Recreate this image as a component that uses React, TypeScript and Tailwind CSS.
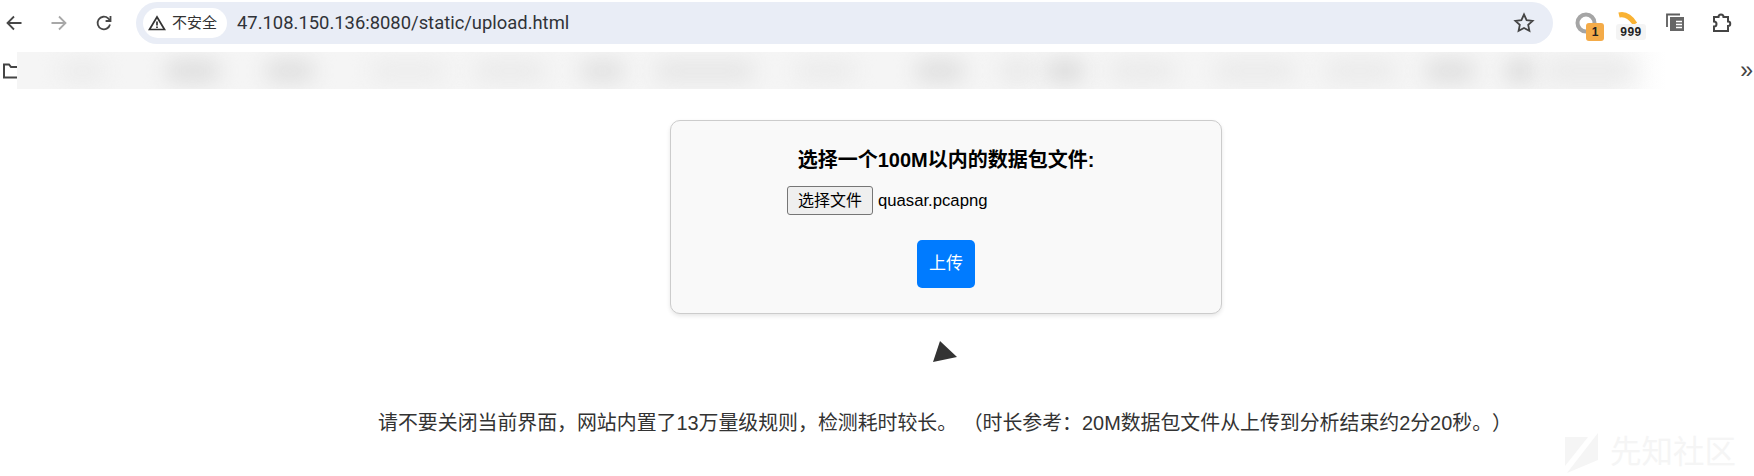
import React from "react";

const font = { fontFamily: '"Liberation Sans","Noto Sans CJK SC",sans-serif' };

const blurs: [number, number, string][] = [
  [45, 60, "#ececec"], [55, 45, "#dfdfdf"], [50, 55, "#e0e0e0"], [75, 30, "#ededed"], [70, 35, "#ebebeb"], [45, 30, "#e2e2e2"],
  [100, 40, "#e7e7e7"], [60, 60, "#ececec"], [50, 35, "#e0e0e0"], [35, 10, "#e9e9e9"], [40, 25, "#dddddd"], [65, 40, "#ebebeb"],
  [80, 30, "#ebebeb"], [70, 30, "#ebebeb"], [50, 30, "#e0e0e0"], [30, 10, "#dcdcdc"], [90, 0, "#ebebeb"],
];

export default function App() {
  return (
    <div className="relative h-[476px] w-[1754px] overflow-hidden bg-white" style={font}>
      <header className="flex h-[46px] items-start">
        <div className="flex h-[46px] w-[136px] shrink-0 items-center pl-[6px]">
          <svg width="16" height="16" viewBox="0 0 16 16" fill="none" stroke="#474747" strokeWidth="1.8">
            <path d="M15.500 8H1.500M8 1.500 1.500 8 8 14.500" />
          </svg>
          <svg className="ml-[29px]" width="16" height="16" viewBox="0 0 16 16" fill="none" stroke="#a8a8a8" strokeWidth="1.8">
            <path d="M.5 8h14M8 1.500 14.500 8 8 14.500" />
          </svg>
          <svg className="ml-[29px]" width="16" height="16" viewBox="0 0 16 16" fill="none" stroke="#474747" strokeWidth="1.8">
            <path d="M14 9.500A6.300 6.300 0 1 1 12.200 3.400L14.200 5.500" />
            <path d="M14.500 1v5H9.600" />
          </svg>
        </div>
        <div className="mt-[2px] flex h-[42px] w-[1417px] shrink-0 items-center rounded-full bg-[#e9edf6] pl-[7px] pr-[18px]">
          <div className="flex h-[30px] w-[84px] shrink-0 items-center rounded-full bg-white pl-[5px]">
            <svg width="18" height="16" viewBox="0 0 18 16" fill="none" stroke="#333333" strokeWidth="1.7">
              <path d="M9 2 1.500 14.500h15Z" />
              <path d="M9 6.500v4M9 11.500v1.500" />
            </svg>
            <span className="ml-[6px] whitespace-nowrap text-[15px] text-[#333333]">不安全</span>
          </div>
          <span className="ml-[10px] text-[18.4px] text-[#303338]" style={{ fontFamily: '"Roboto",sans-serif' }}>
            47.108.150.136:8080/static/upload.html
          </span>
          <svg className="ml-auto" width="22" height="22" viewBox="0 0 22 22" fill="none" stroke="#444444" strokeWidth="1.8">
            <path d="m11 2.500 2.600 5.600 6 .7-4.400 4.100 1.200 6L11 16l-5.400 2.900 1.200-6-4.400-4.100 6-.7Z" />
          </svg>
        </div>
        <div className="relative h-[46px] flex-1">
          <svg className="absolute left-[22px] top-[12px]" width="22" height="22" viewBox="0 0 22 22" fill="none">
            <circle cx="11" cy="11" r="8.500" stroke="#a5a5a5" strokeWidth="4" />
          </svg>
          <span className="absolute left-[33px] top-[23px] flex h-[18px] w-[18px] items-center justify-center rounded-[3px] bg-[#f4ab48] text-[12px] font-bold text-[#222222]">1</span>
          <svg className="absolute left-[65px] top-[12px]" width="20" height="12" viewBox="0 0 20 12" fill="none">
            <path d="M1 3c6-1.500 11 1 16 9" stroke="#f9b233" strokeWidth="5" />
          </svg>
          <span className="absolute left-[63px] top-[24px] flex h-[16px] w-[30px] items-center justify-center rounded-[3px] bg-[#f4f4f4] text-[12px] font-bold tracking-[0.5px] text-[#222222]">999</span>
          <svg className="absolute left-[112px] top-[12px]" width="22" height="22" viewBox="0 0 22 22" fill="none">
            <path d="M2 15V2.500h13" stroke="#5c5c5c" strokeWidth="1.800" />
            <path d="M5 5h14v14H5z" fill="#666666" />
            <path d="M11 9.500h6M11 12.500h6M11 15.500h6" stroke="#ffffff" strokeWidth="1.400" />
          </svg>
          <svg className="absolute left-[157px] top-[12px]" width="22" height="22" viewBox="0 0 22 22" fill="none" stroke="#444444" strokeWidth="2">
            <path d="M4 5h4.500a2.500 2.500 0 0 1 5 0H18v4.500a2.200 2.200 0 0 1 0 4.500v5H4v-4.500a2.500 2.500 0 0 0 0-5Z" />
          </svg>
        </div>
      </header>

      <nav className="mt-[6px] flex h-[37px] items-center">
        <svg className="ml-[3px] w-[14px] shrink-0" height="16" viewBox="0 0 14 16" fill="none" stroke="#444444" strokeWidth="2">
          <path d="M14 14.500H1V1.500h5l2 2.500h6" />
        </svg>
        <div className="h-[37px] w-[1589px] shrink-0 overflow-y-clip">
          <div className="flex h-[37px] items-center bg-[#f5f5f5] pl-[43px]">
            {blurs.map(([w, gap, c], i) => (
              <div key={i} className="h-[24px] shrink-0 rounded-full blur-[10px]" style={{ width: w, marginRight: gap, backgroundColor: c }} />
            ))}
          </div>
        </div>
        <div className="h-[37px] w-[60px] shrink-0 bg-gradient-to-r from-[#f5f5f5] to-white" />
        <span className="ml-auto pr-[1px] text-[23px] leading-none text-[#444444]">»</span>
      </nav>

      <main className="flex flex-col items-center">
        <section className="ml-[138px] mt-[31px] box-border flex h-[194px] w-[552px] flex-col items-center rounded-[10px] border border-[#cccccc] bg-[#f9f9f9] shadow-[0_2px_4px_rgba(0,0,0,0.1)]">
          <h2 className="mt-[27px] text-[20px] font-bold leading-[24px] text-black">选择一个100M以内的数据包文件:</h2>
          <div className="mt-[14px] flex w-[552px] items-center pl-[117px]">
            <button className="h-[29px] w-[86px] rounded-[3px] border border-[#767676] bg-[#efefef] text-[16px] text-black">选择文件</button>
            <span className="ml-[5px] text-[16.700px] text-black">quasar.pcapng</span>
          </div>
          <button className="mt-[25px] h-[48px] w-[58px] rounded-[5px] bg-[#007bff] text-[17px] text-white">上传</button>
        </section>
        <svg className="ml-[136px] mt-[26px]" width="28" height="24" viewBox="0 0 28 24">
          <path d="M9 1 26 17 2 22Z" fill="#333333" />
        </svg>
        <p className="ml-[136px] mt-[47px] whitespace-pre text-[19.900px] leading-[24px] text-[#333333] [text-spacing-trim:space-all]">
          请不要关闭当前界面，网站内置了13万量级规则，检测耗时较长。 （时长参考：20M数据包文件从上传到分析结束约2分20秒。）
        </p>
      </main>

      <div className="absolute left-[1565px] top-[433px] flex items-center text-[#f5f5f5]">
        <svg width="34" height="40" viewBox="0 0 34 40">
          <path d="M0 4H23L0 33ZM33 0V27L2 40Z" fill="#f5f5f5" />
        </svg>
        <span className="ml-[11px] text-[31.500px] leading-none">先知社区</span>
      </div>
    </div>
  );
}
